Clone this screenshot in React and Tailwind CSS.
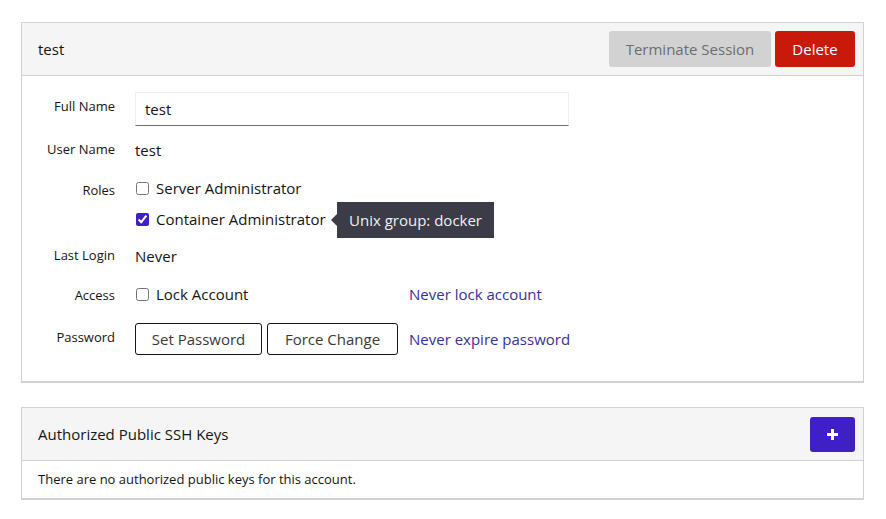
import React from 'react';

const font = { fontFamily: '"Open Sans", "Noto Sans", sans-serif' };

const Label = ({ children, className = '' }) => (
  <div className={`w-[93px] shrink-0 text-right text-[13px] text-[#151515] ${className}`}>{children}</div>
);

const App = () => {
  return (
    <div className="min-h-[519px] bg-white pt-[22px] pl-[21px] pr-[22px] text-[#151515]" style={font}>
      {/* Account card */}
      <div className="border border-b-2 border-[#d2d2d2] bg-white">
        <div className="h-[53px] bg-[#f5f5f5] border-b border-[#d2d2d2] pl-4 pr-2 flex items-center justify-between">
          <span className="text-[15px]">test</span>
          <div className="flex items-center gap-1">
            <button className="h-9 w-[162px] rounded-[3px] bg-[#d2d2d2] text-[15px] text-[#6a6e73]">Terminate Session</button>
            <button className="h-9 w-20 rounded-[3px] bg-[#c9190b] text-[15px] text-white">Delete</button>
          </div>
        </div>

        <div className="pt-4 pb-[26px] flex flex-col">
          <div className="flex items-start gap-5">
            <Label className="pt-[5px]">Full Name</Label>
            <div className="w-[434px] h-[34px] border border-[#f0f0f0] border-b-[#6a6e73] flex items-center px-[9px] text-[15px]">test</div>
          </div>

          <div className="flex items-center gap-5 mt-3 h-6">
            <Label>User Name</Label>
            <span className="text-[15px]">test</span>
          </div>

          <div className="flex items-start gap-5 mt-[14px]">
            <Label className="pt-[5px]">Roles</Label>
            <div className="flex flex-col gap-[7px]">
              <label className="flex items-center h-6 text-[15px]">
                <input type="checkbox" className="w-[13px] h-[13px] mr-[7px] ml-[1px] accent-[#3f1fc6]" />
                Server Administrator
              </label>
              <div className="relative flex items-center h-6">
                <label className="flex items-center text-[15px]">
                  <input type="checkbox" defaultChecked className="w-[13px] h-[13px] mr-[7px] ml-[1px] accent-[#3f1fc6]" />
                  Container Administrator
                </label>
                <div className="absolute left-[202px] top-[-5px] h-9 w-[157px] bg-[#3c3b48] text-[15px] text-[#f0f0f0] flex items-center pl-3">
                  <span className="absolute left-[-6px] top-[12px] w-0 h-0 border-y-[6px] border-y-transparent border-r-[6px] border-r-[#3c3b48]"></span>
                  Unix group: docker
                </div>
              </div>
            </div>
          </div>

          <div className="flex items-center gap-5 mt-[13px] h-6">
            <Label>Last Login</Label>
            <span className="text-[15px]">Never</span>
          </div>

          <div className="flex items-center gap-5 mt-[14px] h-6">
            <Label className="pt-[3px]">Access</Label>
            <label className="w-[274px] flex items-center text-[15px]">
              <input type="checkbox" className="w-[13px] h-[13px] mr-[7px] ml-[1px] accent-[#3f1fc6]" />
              Lock Account
            </label>
            <span className="-ml-5 text-[15px] text-[#3b2f9c]">Never lock account</span>
          </div>

          <div className="flex items-center gap-5 mt-[17px]">
            <Label className="-mt-[2px]">Password</Label>
            <div className="w-[274px] flex items-center gap-[5px]">
              <button className="h-8 w-[127px] rounded-[3px] border border-[#151515] text-[15px] text-[#3a3a3a]">Set Password</button>
              <button className="h-8 w-[131px] rounded-[3px] border border-[#151515] text-[15px] text-[#3a3a3a]">Force Change</button>
            </div>
            <span className="-ml-5 text-[15px] text-[#3b2f9c]">Never expire password</span>
          </div>
        </div>
      </div>

      {/* SSH keys card */}
      <div className="mt-6 border border-b-2 border-[#d2d2d2] bg-white">
        <div className="h-[53px] bg-[#f5f5f5] border-b border-[#d2d2d2] pl-4 pr-2 flex items-center justify-between">
          <span className="text-[15px]">Authorized Public SSH Keys</span>
          <button className="w-[45px] h-[35px] rounded-[3px] bg-[#3f1fc6] flex items-center justify-center">
            <svg width="11" height="11" viewBox="0 0 11 11">
              <path d="M4 0h3v4h4v3H7v4H4V7H0V4h4z" fill="#fff" />
            </svg>
          </button>
        </div>
        <div className="h-[37px] pl-4 flex items-center text-[13px]">There are no authorized public keys for this account.</div>
      </div>
    </div>
  );
};

export default App;
